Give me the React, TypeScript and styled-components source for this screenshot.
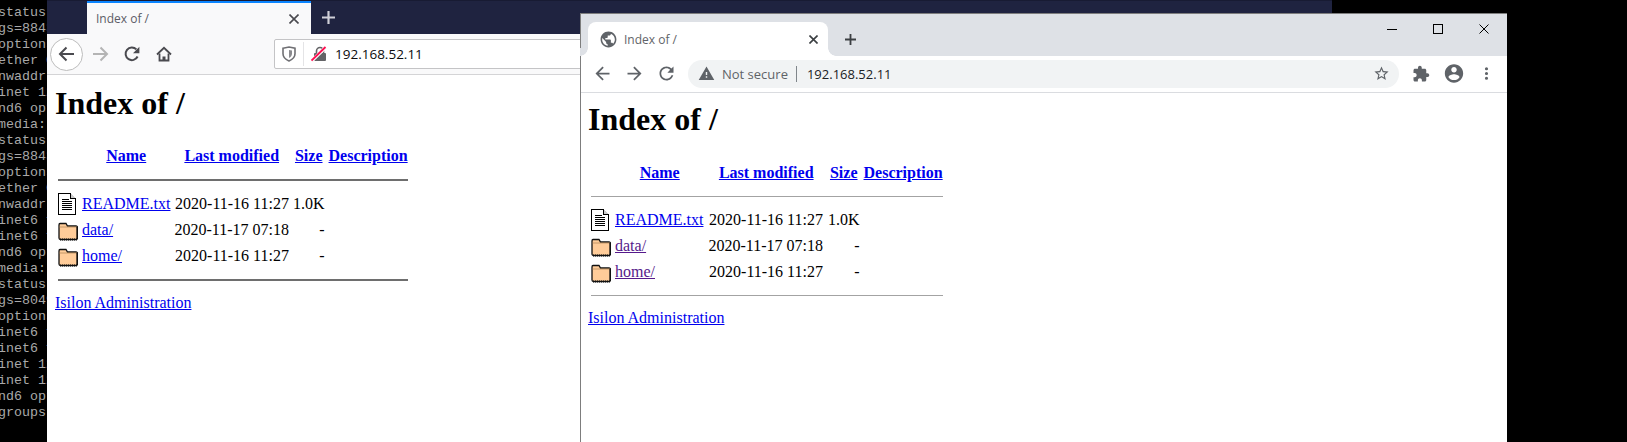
import React from 'react'
import styled, { createGlobalStyle } from 'styled-components'

const GlobalStyle = createGlobalStyle`
  html, body {
    margin: 0;
    padding: 0;
    background: #000;
    overflow: hidden;
  }
`

const uiFont = `"Open Sans", "Liberation Sans", sans-serif`

const Desktop = styled.div`
  position: relative;
  width: 1627px;
  height: 442px;
  overflow: hidden;
  background: #000;
`

const Terminal = styled.pre`
  position: absolute;
  left: 0;
  top: 0;
  width: 47px;
  height: 442px;
  margin: 0;
  padding: 5px 0 0;
  box-sizing: border-box;
  overflow: hidden;
  background: #000;
  color: #a9a9a9;
  font: 13.33px/16px "Liberation Mono", monospace;
  text-indent: -2px;
`

const TermLine = styled.div`
  height: 16px;
  white-space: pre;
`

/* firefox window, behind */
const Firefox = styled.div`
  position: absolute;
  left: 47px;
  top: 0;
  width: 1285px;
  height: 442px;
  display: flex;
  flex-direction: column;
  background: #fff;
`

const FxTabStrip = styled.div`
  position: relative;
  height: 34px;
  flex: none;
  display: flex;
  padding-left: 40px;
  background: #1f2340;
  border-top: 1px solid #181b33;
  box-sizing: border-box;
`

const FxTab = styled.div`
  width: 224px;
  height: 33px;
  box-sizing: border-box;
  display: flex;
  align-items: center;
  justify-content: space-between;
  padding: 0 12px 0 9px;
  background: #f9f9fa;
  border-top: 2px solid #0a84ff;
  color: #5c5c66;
  font: 12px ${uiFont};
`

const FxNewTab = styled.div`
  width: 34px;
  display: flex;
  align-items: center;
  justify-content: center;
`

const FxControls = styled.svg`
  position: absolute;
  left: 1205px;
  top: 11px;
`

const FxToolbar = styled.div`
  height: 41px;
  flex: none;
  box-sizing: border-box;
  display: flex;
  align-items: center;
  background: #f9f9fa;
  border-bottom: 1px solid #d4d4d6;
`

const FxBackCircle = styled.div`
  width: 33px;
  height: 33px;
  margin: 0 3px;
  box-sizing: border-box;
  display: flex;
  align-items: center;
  justify-content: center;
  border: 1px solid #bdbdbd;
  border-radius: 50%;
  background: #fff;
`

const FxButton = styled.div<{ $width: number }>`
  width: ${(p) => p.$width}px;
  display: flex;
  align-items: center;
  justify-content: center;
`

const FxUrlBar = styled.div`
  flex: 1;
  height: 30px;
  margin-left: 94px;
  margin-right: 8px;
  box-sizing: border-box;
  display: flex;
  align-items: center;
  padding-left: 7px;
  background: #fff;
  border: 1px solid #c4c4c6;
  border-radius: 2px;
`

const FxDivider = styled.div`
  width: 1px;
  height: 24px;
  margin: 0 7px;
  background: #e4e4e6;
`

const FxUrl = styled.span`
  margin-left: 8px;
  color: #0c0c0d;
  font: 13.5px ${uiFont};
`

/* directory listing, same page in both browsers */
const Page = styled.div<{ $top: number; $left: number }>`
  padding: ${(p) => p.$top}px 8px 8px ${(p) => p.$left}px;
  flex: 1;
  background: #fff;
  color: #000;
  font: 16px/18px "Liberation Serif", serif;
`

const Heading = styled.h1<{ $gap: number }>`
  margin: 0 0 ${(p) => p.$gap}px;
  font: bold 32px/37px "Liberation Serif", serif;
`

const Listing = styled.table<{ $wide?: boolean }>`
  border-spacing: 2px;
  margin-bottom: 2px;
  font: inherit;
  td, th {
    padding: 1px;
    vertical-align: middle;
  }
  th {
    font-weight: bold;
  }
  td:nth-child(2), td:nth-child(3) {
    padding-right: ${(p) => (p.$wide ? 2 : 1)}px;
  }
`

const IconCell = styled.td`
  && {
    vertical-align: top;
  }
`

const Rule = styled.hr<{ $thin?: boolean }>`
  margin: 8px 0;
  border: 0;
  height: ${(p) => (p.$thin ? 1 : 2)}px;
  background: ${(p) => (p.$thin ? '#a3a3a3' : '#6e6e6e')};
`

const Link = styled.a<{ $visited?: boolean }>`
  color: ${(p) => (p.$visited ? '#551a8b' : '#0000ee')};
  text-decoration: underline;
`

const RightCell = styled.td`
  text-align: right;
`

const FileIcon = styled.svg`
  display: block;
`

/* chrome window, in front */
const Chrome = styled.div`
  position: absolute;
  left: 580px;
  top: 13px;
  width: 927px;
  height: 429px;
  box-sizing: border-box;
  display: flex;
  flex-direction: column;
  background: #fff;
  border-left: 1px solid #7d7d7d;
  border-top: 1px solid #7d7d7d;
`

const ChTitleBar = styled.div`
  height: 42px;
  flex: none;
  display: flex;
  align-items: flex-start;
  padding-left: 7px;
  background: #dee1e6;
`

const ChTab = styled.div`
  position: relative;
  width: 240px;
  height: 34px;
  margin-top: 8px;
  box-sizing: border-box;
  display: flex;
  align-items: center;
  padding: 0 10px 0 11px;
  background: #fff;
  border-radius: 8px 8px 0 0;
  color: #5f6368;
  font: 12px ${uiFont};

  &::before, &::after {
    content: '';
    position: absolute;
    bottom: 0;
    width: 8px;
    height: 8px;
  }
  &::before {
    left: -8px;
    background: radial-gradient(circle at 0 0, #dee1e6 7.5px, #fff 8px);
  }
  &::after {
    right: -8px;
    background: radial-gradient(circle at 100% 0, #dee1e6 7.5px, #fff 8px);
  }
`

const ChTabTitle = styled.span`
  flex: 1;
  margin-left: 6px;
`

const ChNewTab = styled.div`
  width: 44px;
  height: 34px;
  margin-top: 8px;
  display: flex;
  align-items: center;
  justify-content: center;
`

const ChControls = styled.div`
  margin-left: auto;
  display: flex;
`

const ChControl = styled.div`
  width: 46px;
  height: 29px;
  display: flex;
  align-items: center;
  justify-content: center;
`

const ChToolbar = styled.div`
  height: 37px;
  flex: none;
  box-sizing: border-box;
  display: flex;
  align-items: center;
  padding: 0 0 1px 5px;
  background: #fff;
  border-bottom: 1px solid #dadce0;
`

const ChButton = styled.div<{ $width: number }>`
  width: ${(p) => p.$width}px;
  flex: none;
  display: flex;
  align-items: center;
  justify-content: center;
`

const Omnibox = styled.div`
  width: 711px;
  height: 28px;
  margin-left: 5px;
  box-sizing: border-box;
  display: flex;
  align-items: center;
  padding: 0 9px 0 10px;
  background: #f1f3f4;
  border-radius: 14px;
  color: #5f6368;
  font: 13px ${uiFont};
`

const NotSecure = styled.span`
  margin-left: 7px;
`

const OmniDivider = styled.div`
  width: 1px;
  height: 16px;
  margin: 0 10px 0 8px;
  background: #80868b;
`

const OmniUrl = styled.span`
  flex: 1;
  color: #202124;
`

const termLines = [
  'status', 'gs=8843', 'options', 'ether 0', 'nwaddr', 'inet 12', 'nd6 opt', 'media:',
  'status', 'gs=8843', 'options', 'ether 0', 'nwaddr', 'inet6 f', 'inet6 f', 'nd6 opt',
  'media:', 'status', 'gs=8049', 'options', 'inet6 f', 'inet6 f', 'inet 12', 'inet 12',
  'nd6 opt', 'groups',
]

const P = {
  back: 'M20 11H7.83l5.59-5.59L12 4l-8 8 8 8 1.41-1.41L7.83 13H20v-2z',
  forward: 'M12 4l-1.41 1.41L16.17 11H4v2h12.17l-5.58 5.59L12 20l8-8z',
  reload: 'M17.65 6.35C16.2 4.9 14.21 4 12 4c-4.42 0-7.99 3.58-7.99 8s3.57 8 7.99 8c3.73 0 6.84-2.55 7.73-6h-2.08c-.82 2.33-3.04 4-5.65 4-3.31 0-6-2.69-6-6s2.69-6 6-6c1.66 0 3.14.69 4.22 1.78L13 11h7V4l-2.35 2.35z',
  warning: 'M1 21h22L12 2 1 21zm12-3h-2v-2h2v2zm0-4h-2v-4h2v4z',
  star: 'M22 9.24l-7.19-.62L12 2 9.19 8.63 2 9.24l5.46 4.73L5.82 21 12 17.27 18.18 21l-1.63-7.03L22 9.24zM12 15.4l-3.76 2.28 1-4.28-3.32-2.88 4.38-.38L12 6.1l1.71 4.04 4.38.38-3.32 2.88 1 4.28L12 15.4z',
  puzzle: 'M20.5 11H19V7c0-1.1-.9-2-2-2h-4V3.5C13 2.12 11.88 1 10.5 1S8 2.12 8 3.5V5H4c-1.1 0-1.99.9-1.99 2v3.8H3.5c1.49 0 2.7 1.21 2.7 2.7s-1.21 2.7-2.7 2.7H2V20c0 1.1.9 2 2 2h3.8v-1.5c0-1.49 1.21-2.7 2.7-2.7 1.49 0 2.7 1.21 2.7 2.7V22H17c1.1 0 2-.9 2-2v-4h1.5c1.38 0 2.5-1.12 2.5-2.5S21.88 11 20.5 11z',
  account: 'M12 2C6.48 2 2 6.48 2 12s4.48 10 10 10 10-4.48 10-10S17.52 2 12 2zm0 3c1.66 0 3 1.34 3 3s-1.34 3-3 3-3-1.34-3-3 1.34-3 3-3zm0 14.2c-2.5 0-4.71-1.28-6-3.22.03-1.99 4-3.08 6-3.08 1.99 0 5.97 1.09 6 3.08-1.29 1.94-3.5 3.22-6 3.22z',
  globe: 'M12 2C6.48 2 2 6.48 2 12s4.48 10 10 10 10-4.48 10-10S17.52 2 12 2zm-1 17.93c-3.95-.49-7-3.85-7-7.93 0-.62.08-1.21.21-1.79L9 15v1c0 1.1.9 2 2 2v1.93zm6.9-2.54c-.26-.81-1-1.39-1.9-1.39h-1v-3c0-.55-.45-1-1-1H8v-2h2c.55 0 1-.45 1-1V7h2c1.1 0 2-.9 2-2v-.41c2.93 1.19 5 4.06 5 7.41 0 2.08-.8 3.97-2.1 5.39z',
  dots: 'M12 8a2 2 0 1 0 0-4 2 2 0 0 0 0 4zm0 2a2 2 0 1 0 0 4 2 2 0 0 0 0-4zm0 6a2 2 0 1 0 0 4 2 2 0 0 0 0-4z',
}

function Glyph({ d, size, color }: { d: string; size: number; color: string }) {
  return (
    <svg width={size} height={size} viewBox="0 0 24 24" fill={color}>
      <path d={d} />
    </svg>
  )
}

function Cross({ size, color, width = 1.6 }: { size: number; color: string; width?: number }) {
  return (
    <svg width={size} height={size} viewBox="0 0 10 10" stroke={color} strokeWidth={width} fill="none">
      <path d="M0.5 0.5L9.5 9.5M9.5 0.5L0.5 9.5" />
    </svg>
  )
}

function Plus({ size, color, width = 2 }: { size: number; color: string; width?: number }) {
  return (
    <svg width={size} height={size} viewBox="0 0 12 12" stroke={color} strokeWidth={width} fill="none">
      <path d="M6 0V12M0 6H12" />
    </svg>
  )
}

function FxArrow({ color, flip }: { color: string; flip?: boolean }) {
  return (
    <svg width="17" height="16" viewBox="0 0 17 16" fill="none" stroke={color} strokeWidth="2"
      style={flip ? { transform: 'scaleX(-1)' } : undefined}>
      <path d="M16 8H2M8.5 1.5L2 8l6.5 6.5" />
    </svg>
  )
}

function FxReload() {
  return (
    <svg width="16" height="16" viewBox="0 0 16 16" fill="none">
      <path d="M13.6 10.5A6.3 6.3 0 1 1 12.4 3.4" stroke="#4a4a4f" strokeWidth="2" />
      <path d="M15.4 0.8V7.2H9z" fill="#4a4a4f" />
    </svg>
  )
}

function FxHome() {
  return (
    <svg width="16" height="16" viewBox="0 0 16 16" fill="none">
      <path d="M1 8.500L8 1.800L15 8.500" stroke="#4a4a4f" strokeWidth="1.800" />
      <path d="M3.500 7.500V14.500H12.500V7.500" stroke="#4a4a4f" strokeWidth="1.800" />
      <rect x="6.500" y="10.500" width="3" height="4.500" fill="#4a4a4f" />
    </svg>
  )
}

function FxShield() {
  return (
    <svg width="14" height="16" viewBox="0 0 14 16" fill="none">
      <path d="M1 2.200L7 1l6 1.200v5.600c0 3.400-2.800 5.800-6 7.200-3.200-1.400-6-3.800-6-7.200z" stroke="#707074" strokeWidth="1.600" />
      <path d="M7 4L10 4.600V7.800C10 9.600 8.700 11 7 12z" fill="#8a8a8e" />
    </svg>
  )
}

function FxLock() {
  return (
    <svg width="16" height="16" viewBox="0 0 16 16" fill="none">
      <rect x="3" y="7" width="12" height="8" rx="1" fill="#636366" />
      <path d="M5.500 7V5a3.500 3.500 0 0 1 7 0v2" stroke="#636366" strokeWidth="1.600" />
      <path d="M0.800 14.800L14.800 1.200" stroke="#f9f9fa" strokeWidth="3.400" />
      <path d="M0.500 14.500L14.500 1" stroke="#ff0d4f" strokeWidth="1.800" />
    </svg>
  )
}

function TextIcon() {
  return (
    <FileIcon width="20" height="22" viewBox="0 0 20 22" shapeRendering="crispEdges">
      <path d="M0.500 0.500H12.500L17.500 5.500V21.500H0.500z" fill="#fff" stroke="#000" />
      <path d="M12.500 0.500V5.500H17.500" fill="#ccc" stroke="#000" />
      <path d="M4 6.500H11M4 8.500H14M4 10.500H14M4 12.500H14M4 14.500H14M4 16.500H14" stroke="#000" />
    </FileIcon>
  )
}

function FolderIcon() {
  return (
    <FileIcon width="20" height="22" viewBox="0 0 20 22">
      <path d="M2 4.500Q1 4.500 1 6V19Q1 20.500 2.500 20.500H18Q19.500 20.500 19.500 19V8.500Q19.500 7 18 7H9.500L8 4.500z" fill="#ffcc99" stroke="#111" strokeWidth="1.300" />
      <path d="M1.500 8H19" stroke="#b58a5c" strokeWidth="0.800" />
      <path d="M2 20.600H19.500" stroke="#111" strokeWidth="2" strokeDasharray="1 1" />
      <path d="M19.300 8V20" stroke="#111" strokeWidth="1.800" />
    </FileIcon>
  )
}

function IndexPage({ top, left, gap, thin, visited }: {
  top: number
  left: number
  gap: number
  thin?: boolean
  visited?: boolean
}) {
  const rows = [
    { name: 'README.txt', date: '2020-11-16 11:27', size: '1.0K', dir: false },
    { name: 'data/', date: '2020-11-17 07:18', size: '-', dir: true },
    { name: 'home/', date: '2020-11-16 11:27', size: '-', dir: true },
  ]
  return (
    <Page $top={top} $left={left}>
      <Heading $gap={gap}>Index of /</Heading>
      <Listing $wide={thin}>
        <tbody>
          <tr>
            <th><FileIcon width="20" height="22" /></th>
            <th><Link href="#">Name</Link></th>
            <th><Link href="#">Last modified</Link></th>
            <th><Link href="#">Size</Link></th>
            <th><Link href="#">Description</Link></th>
          </tr>
          <tr><th colSpan={5}><Rule $thin={thin} /></th></tr>
          {rows.map((r) => (
            <tr key={r.name}>
              <IconCell>{r.dir ? <FolderIcon /> : <TextIcon />}</IconCell>
              <td><Link href="#" $visited={visited && r.dir}>{r.name}</Link></td>
              <RightCell>{r.date}</RightCell>
              <RightCell>{r.size}</RightCell>
              <td>&nbsp;</td>
            </tr>
          ))}
          <tr><th colSpan={5}><Rule $thin={thin} /></th></tr>
        </tbody>
      </Listing>
      <Link href="#">Isilon Administration</Link>
    </Page>
  )
}

export default function App() {
  return (
    <Desktop>
      <GlobalStyle />
      <Terminal>
        {termLines.map((line, i) => (
          <TermLine key={i}>{line}</TermLine>
        ))}
      </Terminal>

      <Firefox>
        <FxTabStrip>
          <FxTab>
            <span>Index of /</span>
            <Cross size={10} color="#4a4a4f" />
          </FxTab>
          <FxNewTab><Plus size={13} color="#d0d0d8" /></FxNewTab>
          <FxControls width="70" height="6" viewBox="0 0 70 6" stroke="#a4a4ae" fill="none">
            <path d="M5 1.500H16M51 1L60 10M60 1L51 10" />
          </FxControls>
        </FxTabStrip>
        <FxToolbar>
          <FxBackCircle><FxArrow color="#4a4a4f" /></FxBackCircle>
          <FxButton $width={29}><FxArrow color="#b4b4b4" flip /></FxButton>
          <FxButton $width={33}><FxReload /></FxButton>
          <FxButton $width={32}><FxHome /></FxButton>
          <FxUrlBar>
            <FxShield />
            <FxDivider />
            <FxLock />
            <FxUrl>192.168.52.11</FxUrl>
          </FxUrlBar>
        </FxToolbar>
        <IndexPage top={10} left={8} gap={20} />
      </Firefox>

      <Chrome>
        <ChTitleBar>
          <ChTab>
            <Glyph d={P.globe} size={19} color="#5f6368" />
            <ChTabTitle>Index of /</ChTabTitle>
            <Cross size={9} color="#3c4043" width={1.8} />
          </ChTab>
          <ChNewTab><Plus size={11} color="#3c4043" /></ChNewTab>
          <ChControls>
            <ChControl>
              <svg width="10" height="10" viewBox="0 0 10 10" stroke="#000" fill="none"><path d="M0 5.500H10" /></svg>
            </ChControl>
            <ChControl>
              <svg width="10" height="10" viewBox="0 0 10 10" stroke="#000" fill="none"><rect x="0.500" y="0.500" width="9" height="9" /></svg>
            </ChControl>
            <ChControl><Cross size={10} color="#000" width={1} /></ChControl>
          </ChControls>
        </ChTitleBar>
        <ChToolbar>
          <ChButton $width={32}><Glyph d={P.back} size={21} color="#5f6368" /></ChButton>
          <ChButton $width={32}><Glyph d={P.forward} size={21} color="#5f6368" /></ChButton>
          <ChButton $width={33}><Glyph d={P.reload} size={21} color="#5f6368" /></ChButton>
          <Omnibox>
            <Glyph d={P.warning} size={17} color="#5f6368" />
            <NotSecure>Not secure</NotSecure>
            <OmniDivider />
            <OmniUrl>192.168.52.11</OmniUrl>
            <Glyph d={P.star} size={17} color="#5f6368" />
          </Omnibox>
          <ChButton $width={44}><Glyph d={P.puzzle} size={18} color="#5f6368" /></ChButton>
          <ChButton $width={22}><Glyph d={P.account} size={23} color="#5f6368" /></ChButton>
          <ChButton $width={42}><Glyph d={P.dots} size={19} color="#5f6368" /></ChButton>
        </ChToolbar>
        <IndexPage top={8} left={7} gap={21} thin visited />
      </Chrome>
    </Desktop>
  )
}
